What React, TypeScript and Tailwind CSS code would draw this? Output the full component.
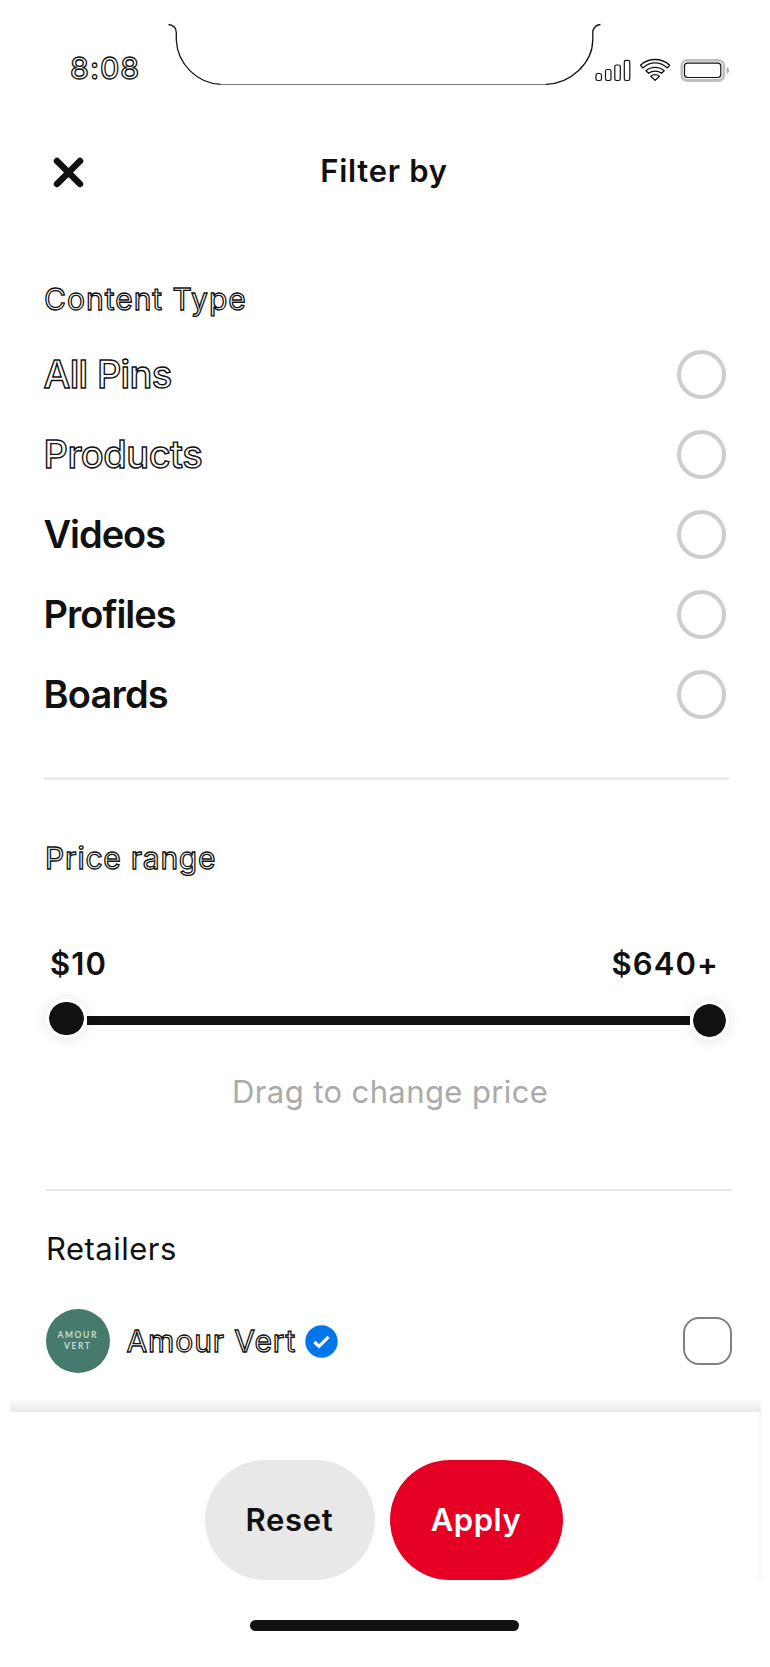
import React from "react";

const outline = "text-white [-webkit-text-stroke:1.3px_#111]";

const contentTypes = [
  { label: "All Pins", cls: "font-medium text-white [-webkit-text-stroke:1.4px_#111] tracking-[-0.7px]" },
  { label: "Products", cls: "font-medium text-white [-webkit-text-stroke:1.4px_#111] tracking-[-0.5px]" },
  { label: "Videos", cls: "font-semibold tracking-[-1.05px]" },
  { label: "Profiles", cls: "font-semibold tracking-[-1px]" },
  { label: "Boards", cls: "font-semibold tracking-[-0.8px]" },
];

function StatusBar() {
  return (
    <div className="flex h-[110px] items-start">
      <div className={`w-[167px] pl-[70px] pt-[48px] text-[30px] font-medium leading-[40px] tracking-[1px] ${outline}`}>
        8:08
      </div>
      <svg width="435" height="110" viewBox="167 0 435 110" fill="none" stroke="#111">
        <path d="M168.500 24.500C173.500 25 176.300 28 176.300 33V40C177.500 64 197 83.500 221 84.300" strokeWidth="1.300" />
        <path d="M220 84.500H548" stroke="#777" strokeWidth="1" />
        <path d="M546 84.300C571 83.500 592.500 63 592.800 40V31C594 27.500 596.500 24.500 600.500 24.500" strokeWidth="1.300" />
      </svg>
      <svg className="-ml-[10px]" width="150" height="110" viewBox="592 0 150 110" fill="none" stroke="#111">
        <rect x="596" y="73.500" width="5.500" height="7" rx="1.700" strokeWidth="1.200" />
        <rect x="605.500" y="69.500" width="5.500" height="11" rx="1.700" strokeWidth="1.200" />
        <rect x="614.800" y="65" width="5.500" height="15.500" rx="1.700" strokeWidth="1.200" />
        <rect x="624.300" y="60.300" width="5.500" height="20.200" rx="1.700" strokeWidth="1.200" />
        <g strokeWidth="1.300" strokeLinejoin="round">
          <path d="M640.500 65.200C648.500 57.600 661.500 57.600 669.700 65.200L667.300 67.900C660 61.300 650 61.300 642.900 67.900Z" />
          <path d="M646 70.700C651 66.200 659.200 66.200 664.200 70.700L661.500 73.200C658 70.300 652.200 70.300 648.700 73.200Z" />
          <path d="M650.800 76.200C653.200 74.200 657 74.200 659.400 76.200L655.100 80.400Z" />
        </g>
        <rect x="681.800" y="60.300" width="42" height="20.200" rx="5.500" stroke="#c0c0c0" strokeWidth="2.800" />
        <rect x="684.500" y="63.200" width="36.300" height="14.300" rx="3" strokeWidth="1.200" />
        <path d="M726.500 67C730.200 68.500 730.200 72.500 726.500 74Z" fill="#b5b5b5" stroke="none" />
      </svg>
    </div>
  );
}

function Header() {
  return (
    <header className="grid h-[124px] grid-cols-[1fr_auto_1fr] items-center pl-[53px]">
      <button aria-label="Close" className="justify-self-start">
        <svg width="31" height="31" viewBox="0 0 31 31" stroke="#111" strokeWidth="6.500" strokeLinecap="round">
          <path d="M4 4L27 27M27 4L4 27" />
        </svg>
      </button>
      <h1 className="-mt-[2px] mr-[55px] text-[31px] font-semibold leading-[40px] tracking-[0.7px]">Filter by</h1>
    </header>
  );
}

function ContentType() {
  return (
    <section className="pl-[44px] pr-[44.500px] pt-[36px]">
      <h2 className={`h-[60px] text-[30px] leading-[58px] tracking-[1px] ${outline}`}>Content Type</h2>
      <ul className="mt-[4px]">
        {contentTypes.map((t) => (
          <li key={t.label} className="flex h-[80px] items-center justify-between">
            <span className={`-ml-[0.5px] text-[38px] leading-[80px] ${t.cls}`}>{t.label}</span>
            <span className="mt-[1px] size-[48.500px] rounded-full border-4 border-[#cdcdcd]" />
          </li>
        ))}
      </ul>
    </section>
  );
}

function PriceRange() {
  return (
    <section className="pl-[44px]">
      <h2 className={`h-[60px] pl-[1px] text-[30px] leading-[58px] tracking-[0.75px] ${outline}`}>Price range</h2>
      <div className="mt-[45px] flex h-[60px] justify-between pl-[6px] pr-[51px] text-[31px] font-semibold leading-[59px] tracking-[1.1px]">
        <span>$10</span>
        <span>$640+</span>
      </div>
      <div className="mt-[4px] flex h-[44px] w-[687px] items-center">
        <span className="z-10 -mt-[4px] ml-[2px] h-[39px] w-[41px] shrink-0 rounded-full border-[3.5px] border-white bg-[#111] bg-clip-padding shadow-[0_1px_14px_rgba(0,0,0,0.10)]" />
        <span className="mt-[1px] h-[8.500px] flex-1 bg-[#111]" />
        <span className="z-10 mr-[2px] size-[39px] shrink-0 rounded-full border-[3px] border-white bg-[#111] bg-clip-padding shadow-[0_1px_14px_rgba(0,0,0,0.10)]" />
      </div>
      <p className="mt-[23px] h-[54px] pl-[188px] text-[31px] leading-[53px] tracking-[0.4px] text-[#aaa]">Drag to change price</p>
    </section>
  );
}

function Retailers() {
  return (
    <section className="h-[221px] pl-[46px] pr-[38.500px]">
      <h2 className="mt-[28px] h-[60px] text-[31px] leading-[60px] tracking-[0.5px]">Retailers</h2>
      <div className="mt-[30px] flex h-[64px] items-center">
        <span className="flex size-[63.500px] flex-col items-center justify-center rounded-full bg-[#467a6c] text-center font-[Lato] text-[8.500px] font-bold leading-[11px] tracking-[1.6px] text-[#c9dad5]">
          <span>AMOUR</span>
          <span>VERT</span>
        </span>
        <span className={`ml-[17px] text-[30px] leading-[60px] tracking-[0.9px] ${outline}`}>Amour Vert</span>
        <svg className="ml-[9px]" width="33" height="33" viewBox="0 0 33 33">
          <circle cx="16.500" cy="16.500" r="16.200" fill="#0076eb" />
          <path d="M9.300 17L14 21.300L23.500 11.800" fill="none" stroke="#fff" strokeWidth="3.200" />
        </svg>
        <span className="ml-auto size-[48.500px] rounded-[16px] border-2 border-[#808080]" />
      </div>
    </section>
  );
}

export default function App() {
  return (
    <div className="flex h-[1667px] w-[770px] flex-col overflow-hidden bg-white font-[Inter,sans-serif] text-[#111]">
      <StatusBar />
      <Header />
      <ContentType />
      <hr className="ml-[44px] mt-[43px] h-[3px] w-[685px] border-0 bg-[#ebebeb]" />
      <div className="mt-[49px]">
        <PriceRange />
      </div>
      <hr className="ml-[46px] mt-[70px] h-[2px] w-[686px] border-0 bg-[#e6e6e6]" />
      <Retailers />
      <footer className="flex flex-1 flex-col">
        <div className="relative ml-[10px] h-[168px] w-[751px] border-r-2 border-[#f5f5f5]">
          <div className="absolute -top-[14px] left-0 h-[14px] w-[751px] bg-linear-to-t from-[#e9e9e9] to-white" />
          <div className="flex gap-[15px] pl-[194.500px] pt-[48px] text-[31px] font-semibold">
            <button className="h-[120px] w-[170px] rounded-[60px] bg-[#e8e8e8] pt-[1px] tracking-[0.7px]">Reset</button>
            <button className="h-[120px] w-[173px] rounded-[60px] bg-[#e60023] pt-[1px] tracking-[0.5px] text-white">Apply</button>
          </div>
        </div>
        <div className="ml-[250px] mt-[40px] h-[11px] w-[269px] rounded-full bg-[#111]" />
      </footer>
    </div>
  );
}
